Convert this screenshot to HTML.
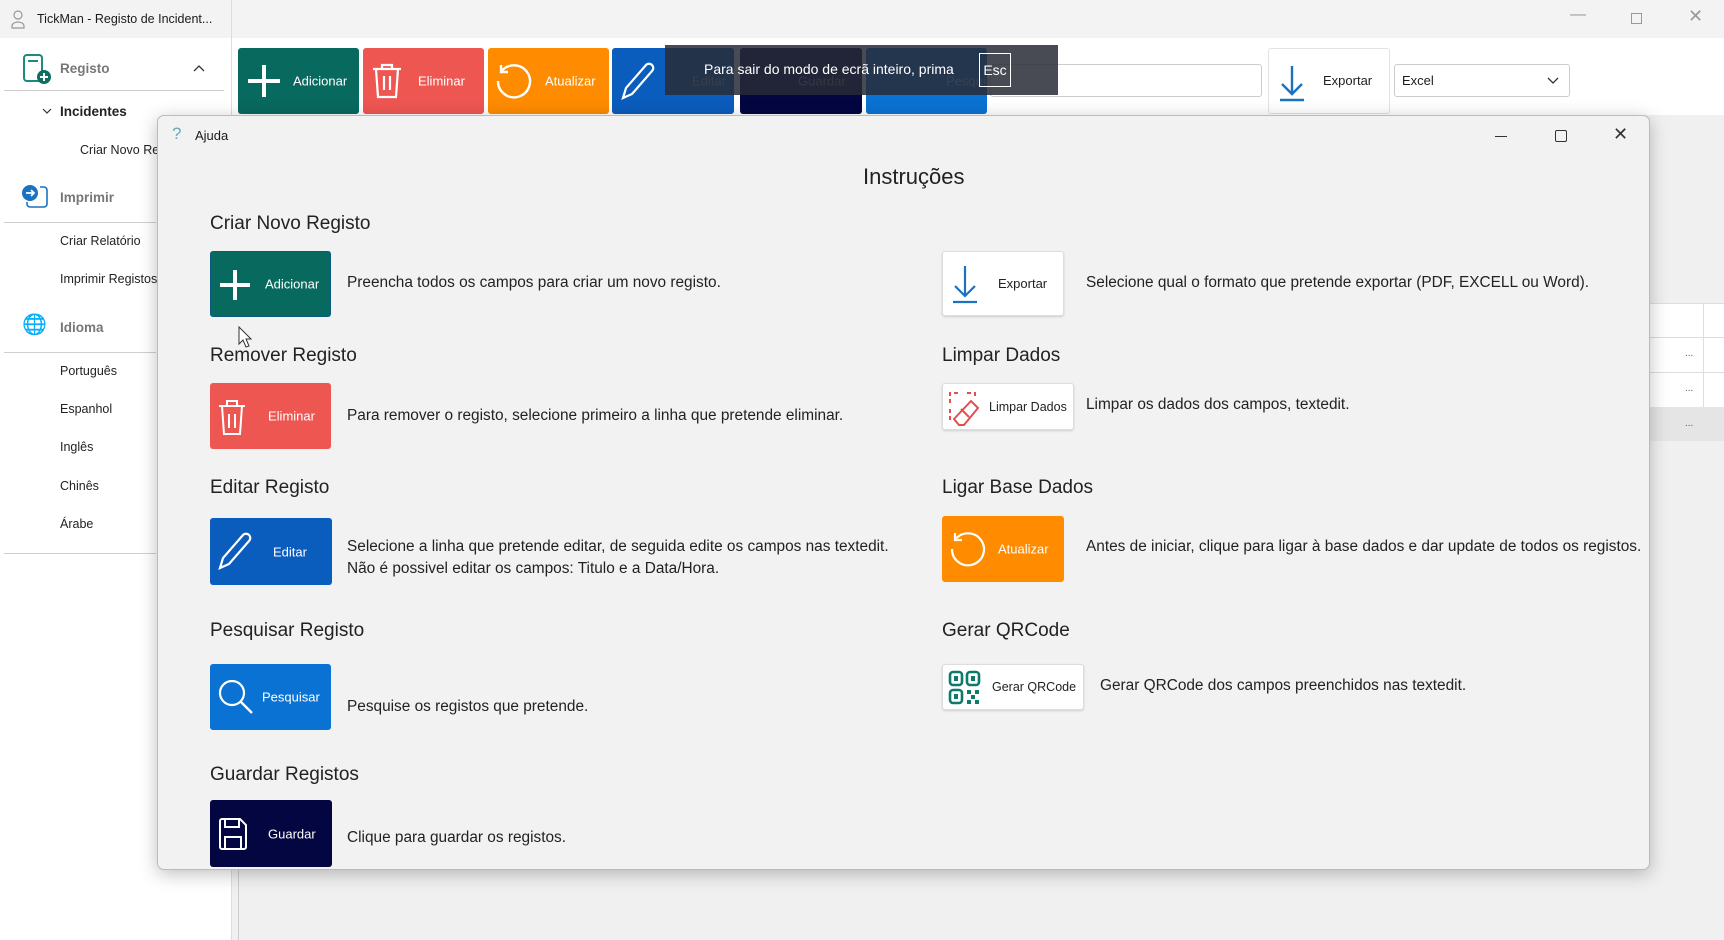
<!DOCTYPE html>
<html><head><meta charset="utf-8"><style>
*{margin:0;padding:0;box-sizing:border-box}
body{width:1724px;height:940px;overflow:hidden;background:#f3f3f3;font-family:"Liberation Sans",sans-serif;position:relative;color:#1b1b1b}
.a{position:absolute}
.t{position:absolute;white-space:nowrap}
.btn{position:absolute;border-radius:3px;color:#fff;font-size:13px}
.btn svg{position:absolute}
.btn span{position:absolute;top:50%;transform:translateY(-50%)}
.h{position:absolute;font-size:19px;color:#222;white-space:nowrap}
.d{position:absolute;font-size:15.4px;color:#222;white-space:nowrap;line-height:22px}
.side{position:absolute;font-size:12.5px;color:#222;white-space:nowrap}
.sb{font-weight:bold;font-size:13.5px}
.line{position:absolute;height:1px;background:#cfcfcf}
.wb{position:absolute;background:#fff;border:1px solid #ddd;border-radius:3px;box-shadow:0 1px 2px rgba(0,0,0,.15);color:#222;font-size:13px}
</style></head><body>
<div class="a" style="left:0;top:0;width:1724px;height:38px;background:#f3f3f3"></div>
<svg class="a" style="left:10px;top:9px" width="16" height="20" viewBox="0 0 16 20"><circle cx="8" cy="6" r="4" fill="none" stroke="#999" stroke-width="1.2"/><path d="M2 19v-2a6 4 0 0 1 12 0v2z" fill="none" stroke="#999" stroke-width="1.2"/></svg>
<div class="t" style="left:37px;top:12px;font-size:12.5px">TickMan - Registo de Incident...</div>
<div class="a" style="left:231px;top:0;width:1px;height:115px;background:#ddd"></div>
<div class="t" style="left:1570px;top:6px;font-size:16px;color:#999">—</div>
<div class="a" style="left:1631px;top:13px;width:11px;height:11px;border:1px solid #999"></div>
<div class="t" style="left:1688px;top:6px;font-size:18px;color:#999">✕</div>
<div class="a" style="left:232px;top:38px;width:1492px;height:77px;background:#fff"></div>
<div class="btn" style="left:238px;top:48px;width:121px;height:66px;background:#08695e"><svg style="left:8px;top:15px" width="36" height="36"><path d="M18 2v32M2 18h32" stroke="#fff" stroke-width="4"/></svg><span style="left:55px">Adicionar</span></div>
<div class="btn" style="left:363px;top:48px;width:121px;height:66px;background:#ee5652"><svg style="left:6px;top:14px" width="36" height="38" viewBox="0 0 36 38"><path d="M4 7h28M13 7V3h10v4M7 7l2 28h18l2-28M15 14v14M21 14v14" fill="none" stroke="#fff" stroke-width="2.2"/></svg><span style="left:55px">Eliminar</span></div>
<div class="btn" style="left:488px;top:48px;width:121px;height:66px;background:#ff8b00"><svg style="left:4px;top:12px" width="42" height="42" viewBox="0 0 42 42"><path d="M9 12A16 16 0 1 1 6 21M9 5v7h7" fill="none" stroke="#fff" stroke-width="2.4"/></svg><span style="left:57px">Atualizar</span></div>
<div class="btn" style="left:612px;top:48px;width:122px;height:66px;background:#0a5cbd"><svg style="left:6px;top:12px" width="40" height="42" viewBox="0 0 40 42"><path d="M5 38l3-10L28 5a4 4 0 0 1 6 6L14 34z" fill="none" stroke="#fff" stroke-width="2.2"/></svg><span style="left:80px;color:#9ab">Editar</span></div>
<div class="btn" style="left:740px;top:48px;width:122px;height:66px;background:#030640"><span style="left:58px;color:#778">Guardar</span></div>
<div class="btn" style="left:866px;top:48px;width:121px;height:66px;background:#0a72d2"><span style="left:80px;color:#9bd">Pesquisar</span></div>
<div class="a" style="left:990px;top:64px;width:272px;height:33px;border:1px solid #ccc;border-radius:3px;background:#fff"></div>
<div class="wb" style="left:1268px;top:48px;width:122px;height:66px;box-shadow:none;border-color:#e2e2e2"><svg class="a" style="left:8px;top:15px" width="30" height="38" viewBox="0 0 30 38"><path d="M15 2v28M5 20l10 10 10-10M3 36h24" fill="none" stroke="#1b72c0" stroke-width="2.4"/></svg><span class="t" style="left:54px;top:24px">Exportar</span></div>
<div class="a" style="left:1394px;top:64px;width:176px;height:33px;border:1px solid #ccc;border-radius:3px;background:#fff;font-size:13px"><span class="t" style="left:7px;top:8px">Excel</span><svg class="a" style="left:152px;top:12px" width="12" height="8"><path d="M1 1l5 5 5-5" fill="none" stroke="#333" stroke-width="1.3"/></svg></div>
<div class="a" style="left:665px;top:45px;width:393px;height:50px;background:rgba(40,44,54,.85)"></div>
<div class="t" style="left:704px;top:61px;color:#fff;font-size:14px">Para sair do modo de ecrã inteiro, prima</div>
<div class="a" style="left:979px;top:53px;width:32px;height:34px;border:1px solid #fff;color:#fff;font-size:14px;text-align:center;line-height:32px">Esc</div>
<div class="a" style="left:0;top:38px;width:231px;height:902px;background:#fff"></div>
<div class="a" style="left:231px;top:38px;width:1px;height:902px;background:#ddd"></div>
<svg class="a" style="left:22px;top:53px" width="30" height="32" viewBox="0 0 30 32"><rect x="2" y="2" width="18" height="26" rx="3" fill="none" stroke="#1d8a7a" stroke-width="2"/><path d="M6 8h10" stroke="#1d8a7a" stroke-width="2"/><circle cx="22" cy="24" r="7" fill="#0d6e62"/><path d="M22 20v8M18 24h8" stroke="#fff" stroke-width="2"/></svg>
<div class="side sb" style="left:60px;top:61px;color:#777">Registo</div>
<svg class="a" style="left:193px;top:64px" width="12" height="8"><path d="M1 7l5-5 5 5" fill="none" stroke="#333" stroke-width="1.3"/></svg>
<div class="line" style="left:4px;top:90px;width:220px"></div>
<svg class="a" style="left:42px;top:108px" width="10" height="7"><path d="M1 1l4 4 4-4" fill="none" stroke="#333" stroke-width="1.2"/></svg>
<div class="side sb" style="left:60px;top:104px;color:#222">Incidentes</div>
<div class="side" style="left:80px;top:143px">Criar Novo Re</div>
<svg class="a" style="left:20px;top:183px" width="30" height="30" viewBox="0 0 30 30"><circle cx="10" cy="10" r="8" fill="#1b72c0"/><path d="M6 10h8M11 7l3 3-3 3" stroke="#fff" stroke-width="1.8" fill="none"/><path d="M20 4h4a3 3 0 0 1 3 3v14a3 3 0 0 1-3 3H10a3 3 0 0 1-3-3v-2" fill="none" stroke="#1b72c0" stroke-width="1.6"/></svg>
<div class="side sb" style="left:60px;top:190px;color:#777">Imprimir</div>
<div class="line" style="left:4px;top:222px;width:152px"></div>
<div class="side" style="left:60px;top:234px">Criar Relatório</div>
<div class="side" style="left:60px;top:272px">Imprimir Registos</div>
<div class="t" style="left:22px;top:312px;font-size:20px;color:#555">🌐</div>
<div class="side sb" style="left:60px;top:320px;color:#777">Idioma</div>
<div class="line" style="left:4px;top:352px;width:152px"></div>
<div class="side" style="left:60px;top:364px">Português</div>
<div class="side" style="left:60px;top:402px">Espanhol</div>
<div class="side" style="left:60px;top:440px">Inglês</div>
<div class="side" style="left:60px;top:479px">Chinês</div>
<div class="side" style="left:60px;top:517px">Árabe</div>
<div class="line" style="left:4px;top:553px;width:152px"></div>
<div class="a" style="left:232px;top:115px;width:1492px;height:825px;background:#f0f0f0"></div>
<div class="a" style="left:238px;top:870px;width:1px;height:70px;background:#ccc"></div>
<div class="a" style="left:1650px;top:303px;width:74px;height:138px;background:#fff"></div>
<div class="a" style="left:1650px;top:303px;width:74px;height:1px;background:#ddd"></div>
<div class="a" style="left:1650px;top:337px;width:74px;height:1px;background:#ddd"></div>
<div class="a" style="left:1650px;top:372px;width:74px;height:1px;background:#ddd"></div>
<div class="a" style="left:1650px;top:407px;width:74px;height:34px;background:#e5e5e5"></div>
<div class="a" style="left:1703px;top:303px;width:1px;height:104px;background:#ddd"></div>
<div class="t" style="left:1685px;top:348px;font-size:10px;color:#555">...</div>
<div class="t" style="left:1685px;top:383px;font-size:10px;color:#555">...</div>
<div class="t" style="left:1685px;top:418px;font-size:10px;color:#555">...</div>
<div class="a" style="left:157px;top:115px;width:1493px;height:755px;background:#f2f2f2;border:1px solid #bbb;border-radius:7px;box-shadow:0 4px 18px rgba(0,0,0,.25)"></div>
<div class="t" style="left:172px;top:124px;font-size:17px;color:#6aa8b8">?</div>
<div class="t" style="left:195px;top:128px;font-size:13px">Ajuda</div>
<div class="a" style="left:1495px;top:136px;width:12px;height:1px;background:#333"></div>
<div class="a" style="left:1555px;top:130px;width:12px;height:12px;border:1.3px solid #333;border-radius:2px"></div>
<div class="t" style="left:1613px;top:124px;font-size:18px;color:#333">✕</div>
<div class="t" style="left:863px;top:164px;font-size:22px;color:#222">Instruções</div>
<div class="h" style="left:210px;top:213px">Criar Novo Registo</div>
<div class="btn" style="left:210px;top:251px;width:121px;height:66px;background:#08695e;border:1px solid #0a5a80"><svg style="left:7px;top:16px" width="34" height="34"><path d="M17 2v30M2 17h30" stroke="#fff" stroke-width="4"/></svg><span style="left:54px">Adicionar</span></div>
<div class="d" style="left:347px;top:272px">Preencha todos os campos para criar um novo registo.</div>
<div class="h" style="left:210px;top:345px">Remover Registo</div>
<div class="btn" style="left:210px;top:383px;width:121px;height:66px;background:#ee5652"><svg style="left:6px;top:14px" width="32" height="40" viewBox="0 0 32 40"><path d="M3 9h26M11 9V4h10v5M6 9l2 28h16l2-28M13 17v14M19 17v14" fill="none" stroke="#fff" stroke-width="2"/></svg><span style="left:58px">Eliminar</span></div>
<div class="d" style="left:347px;top:405px">Para remover o registo, selecione primeiro a linha que pretende eliminar.</div>
<div class="h" style="left:210px;top:477px">Editar Registo</div>
<div class="btn" style="left:210px;top:518px;width:122px;height:67px;background:#0a5cbd"><svg style="left:5px;top:12px" width="40" height="42" viewBox="0 0 40 42"><path d="M5 38l3-10L28 5a4 4 0 0 1 6 6L14 34z" fill="none" stroke="#fff" stroke-width="2.2"/></svg><span style="left:63px">Editar</span></div>
<div class="d" style="left:347px;top:536px">Selecione a linha que pretende editar, de seguida edite os campos nas textedit.<br>Não é possivel editar os campos: Titulo e a Data/Hora.</div>
<div class="h" style="left:210px;top:620px">Pesquisar Registo</div>
<div class="btn" style="left:210px;top:664px;width:121px;height:66px;background:#0a72d2"><svg style="left:7px;top:14px" width="38" height="38" viewBox="0 0 38 38"><circle cx="15" cy="15" r="12" fill="none" stroke="#fff" stroke-width="2.2"/><path d="M24 24l11 11" stroke="#fff" stroke-width="2.4"/></svg><span style="left:52px">Pesquisar</span></div>
<div class="d" style="left:347px;top:696px">Pesquise os registos que pretende.</div>
<div class="h" style="left:210px;top:764px">Guardar Registos</div>
<div class="btn" style="left:210px;top:800px;width:122px;height:67px;background:#030640"><svg style="left:7px;top:17px" width="32" height="34" viewBox="0 0 32 34"><path d="M3 4a2 2 0 0 1 2-2h18l6 6v22a2 2 0 0 1-2 2H5a2 2 0 0 1-2-2z" fill="none" stroke="#fff" stroke-width="2"/><path d="M8 2v8h14V2M8 31V20h16v11" fill="none" stroke="#fff" stroke-width="2"/></svg><span style="left:58px">Guardar</span></div>
<div class="d" style="left:347px;top:827px">Clique para guardar os registos.</div>
<div class="wb" style="left:942px;top:251px;width:122px;height:65px"><svg class="a" style="left:7px;top:12px" width="30" height="40" viewBox="0 0 30 40"><path d="M15 2v30M5 22l10 10 10-10M3 38h24" fill="none" stroke="#1b72c0" stroke-width="2.2"/></svg><span class="t" style="left:55px;top:24px">Exportar</span></div>
<div class="d" style="left:1086px;top:272px">Selecione qual o formato que pretende exportar (PDF, EXCELL ou Word).</div>
<div class="h" style="left:942px;top:345px">Limpar Dados</div>
<div class="wb" style="left:942px;top:383px;width:132px;height:47px"><svg class="a" style="left:4px;top:5px" width="38" height="38" viewBox="0 0 38 38"><path d="M3 14V4h10M20 4h8v6M3 20v10h4" fill="none" stroke="#e05050" stroke-width="2" stroke-dasharray="4 3"/><path d="M12 36l-5-6L24 12l7 7-14 17z M14 20l8 8" fill="none" stroke="#e05050" stroke-width="2"/></svg><span class="t" style="left:46px;top:16px;font-size:12.5px">Limpar Dados</span></div>
<div class="d" style="left:1086px;top:394px">Limpar os dados dos campos, textedit.</div>
<div class="h" style="left:942px;top:477px">Ligar Base Dados</div>
<div class="btn" style="left:942px;top:516px;width:122px;height:66px;background:#ff8b00"><svg style="left:4px;top:12px" width="42" height="42" viewBox="0 0 42 42"><path d="M9 12A16 16 0 1 1 6 21M9 5v7h7" fill="none" stroke="#fff" stroke-width="2.2"/></svg><span style="left:56px">Atualizar</span></div>
<div class="d" style="left:1086px;top:536px">Antes de iniciar, clique para ligar à base dados e dar update de todos os registos.</div>
<div class="h" style="left:942px;top:620px">Gerar QRCode</div>
<div class="wb" style="left:942px;top:664px;width:142px;height:46px"><svg class="a" style="left:5px;top:5px" width="34" height="36" viewBox="0 0 34 36"><g fill="none" stroke="#0d7a6a" stroke-width="2.6"><rect x="2" y="2" width="12" height="13" rx="3"/><rect x="19" y="2" width="12" height="13" rx="3"/><rect x="2" y="20" width="12" height="13" rx="3"/></g><g fill="#0d7a6a"><rect x="6" y="6" width="4" height="5"/><rect x="23" y="6" width="4" height="5"/><rect x="6" y="24" width="4" height="5"/><rect x="19" y="20" width="4" height="4"/><rect x="27" y="20" width="4" height="4"/><rect x="23" y="25" width="4" height="4"/><rect x="19" y="30" width="4" height="4"/><rect x="27" y="30" width="4" height="4"/></g></svg><span class="t" style="left:49px;top:15px;font-size:12.5px">Gerar QRCode</span></div>
<div class="d" style="left:1100px;top:675px">Gerar QRCode dos campos preenchidos nas textedit.</div>
<svg class="a" style="left:238px;top:326px" width="14" height="22" viewBox="0 0 14 22"><path d="M1 1v17l4-4 3 7 3-1-3-7h5z" fill="#fff" stroke="#333" stroke-width="1"/></svg>
</body></html>
